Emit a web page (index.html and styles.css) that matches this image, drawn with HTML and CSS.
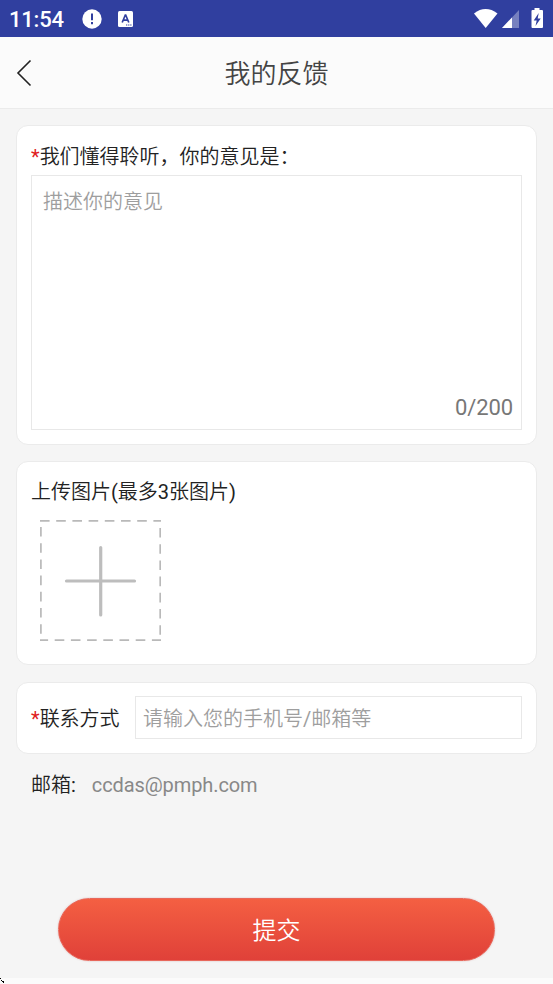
FILE: index.html
```html
<!DOCTYPE html>
<html lang="zh-CN">
<head>
<meta charset="utf-8">
<title>我的反馈</title>
<link rel="stylesheet" href="styles.css">
</head>
<body>
<div class="status">
  <span class="time">11:54</span>
  <svg class="alert" width="20" height="20" viewBox="0 0 20 20"><circle cx="10" cy="10" r="9.7" fill="#fff"/><path d="M10 4.6v6.6M10 13v2.3" stroke="#303f9f" stroke-width="2"/></svg>
  <svg class="keyboard" width="15" height="16" viewBox="0 0 15 16"><rect width="15" height="16" rx="1.5" fill="#fff"/><path d="M4.2 11.5 7.3 4h.4l3.1 7.5M5.3 9.2h4.4" fill="none" stroke="#303f9f" stroke-width="1.7"/><path d="M8 14h1.3m.8 0h1.3m.8 0h1.3" stroke="#303f9f" stroke-width="1.2"/></svg>
  <svg class="signals" width="72" height="22" viewBox="0 0 72 22"><path d="M1 5.4Q12.5-3.4 24.5 5.4L12.7 20Z" fill="#fff"/><path d="M46 2v18H29Z" fill="#7680bf"/><path d="M39 9.4V20H29Z" fill="#fff"/><path d="M61.500 0h5v2h2.500q1 0 1 1v16q0 1-1 1H59.500q-1 0-1-1V3q0-1 1-1h2Z" fill="#fff"/><path d="m65.700 5-5 7.500h3L62.500 18l5.200-7.500h-3Z" fill="#303f9f"/></svg>
</div>
<header class="header">
  <svg class="back" width="16" height="28" viewBox="0 0 16 28"><path d="M14.500 1.500 2 14l12.500 12.500" fill="none" stroke="#222" stroke-width="1.600"/></svg>
  <h1 class="title">我的反馈</h1>
</header>
<main class="content">
  <section class="card opinion">
    <div class="label"><span class="required">*</span>我们懂得聆听，你的意见是：</div>
    <div class="textarea"><span class="hint">描述你的意见</span><span class="count">0/200</span></div>
  </section>
  <section class="card upload">
    <div class="label">上传图片(最多3张图片)</div>
    <svg class="add" width="121" height="121" viewBox="0 0 121 121"><g fill="none" stroke="#b9b9b9" stroke-width="1.7"><path d="M0 .9h121" stroke-dasharray="9.600 6.600"/><path d="M0 120.200h121" stroke-dasharray="9.600 6.600" stroke-dashoffset="1.500"/><path d="M.9 7v114" stroke-dasharray="9.600 6.600"/><path d="M120.200 8v111" stroke-dasharray="9.600 6.600"/></g><path d="M26.500 61h68M60.700 27.500v67.500" stroke="#bdbdbd" stroke-width="3.200" stroke-linecap="round"/></svg>
  </section>
  <section class="card contact">
    <div class="label"><span class="required">*</span>联系方式</div>
    <div class="input">请输入您的手机号/邮箱等</div>
  </section>
  <div class="mail"><span>邮箱:</span><span class="address">ccdas@pmph.com</span></div>
  <button class="submit">提交</button>
</main>
<footer class="bottom"><svg width="4" height="5" viewBox="0 0 4 5"><path d="M0 0h1v1H0zM1 2h1v1H1zM2 3h2v2H3V4H2z" fill="#000"/></svg></footer>
</body>
</html>
```
FILE: styles.css
```css
* { box-sizing: border-box; }
body {
  margin: 0;
  height: 984px;
  display: flex;
  flex-direction: column;
  overflow: hidden;
  background: #f5f5f5;
  color: #222;
  font: 20px/30px Roboto, "Noto Sans CJK SC DemiLight", "Noto Sans CJK SC Light", "Noto Sans CJK SC", sans-serif;
}
svg { display: block; flex: none; }
.status {
  height: 37px;
  flex: none;
  display: flex;
  align-items: center;
  background: #303f9f;
  color: #fff;
  padding: 0 8px 0 9px;
}
.time { width: 73px; font-size: 22px; font-weight: 500; letter-spacing: -.2px; padding-top: 2px; }
.keyboard { margin-left: 16px; }
.signals { margin-left: auto; }
.header {
  height: 72px;
  flex: none;
  display: grid;
  grid-template-columns: 36px 1fr 36px;
  align-items: center;
  background: #fbfbfb;
  border-bottom: 1px solid #ebebeb;
}
.back { margin-left: 16px; }
.title { margin: 0; padding-top: 2px; font-size: 26px; font-weight: 400; line-height: 40px; text-align: center; color: #444; }
.content { flex: 1; display: flex; flex-direction: column; padding: 16px 16px 0; }
.card { background: #fff; border: 1px solid #ebebeb; border-radius: 12px; padding: 14px; flex: none; }
.opinion { height: 320px; padding-top: 16px; display: flex; flex-direction: column; }
.label { height: 33px; flex: none; }
.required { color: #e02020; }
.textarea {
  flex: 1;
  display: flex;
  flex-direction: column;
  justify-content: space-between;
  border: 1px solid #e8e8e8;
  padding: 11px 8px 6px 11px;
}
.hint { color: #9e9e9e; }
.count { align-self: flex-end; font-size: 22px; letter-spacing: -.1px; color: #777; }
.upload { height: 204px; margin-top: 16px; padding-top: 15px; }
.add { margin: 10px 0 0 9px; }
.contact { height: 72px; margin-top: 17px; display: flex; align-items: center; }
.contact .label { width: 104px; height: 30px; padding-top: 1px; }
.input { flex: 1; height: 43px; margin-top: -1px; border: 1px solid #e8e8e8; padding: 7px 8px 0 7px; color: #9e9e9e; }
.mail { display: flex; gap: 16px; margin: 16px 15px 0; }
.address { color: #888; letter-spacing: -.1px; }
.submit {
  height: 63px;
  margin: 98px 42px 0;
  padding: 2px 0 0;
  border: 1px solid #e8675b;
  border-radius: 32px;
  background: linear-gradient(#f45f42, #e04139);
  box-shadow: 0 0 2px #d9bcbc;
  color: #fff;
  font: inherit;
  font-size: 24px;
}
.bottom { height: 6px; flex: none; background: #fbfbfb; }
```
